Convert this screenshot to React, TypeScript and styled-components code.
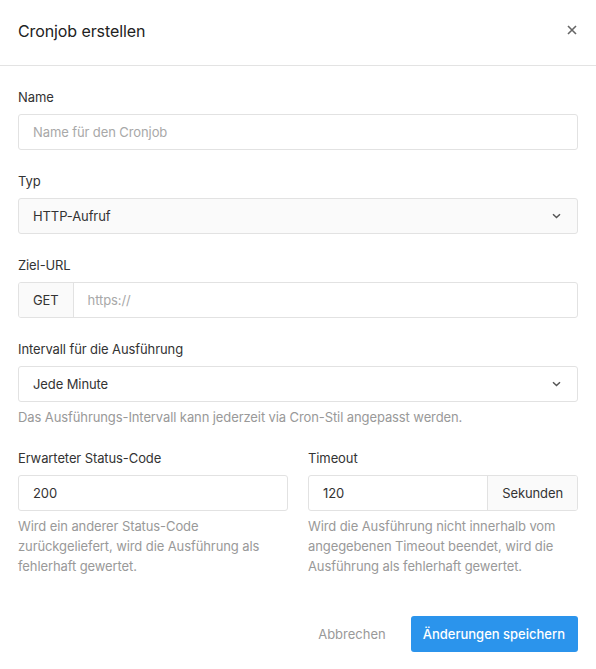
import React from "react";
import styled, { createGlobalStyle } from "styled-components";

const Global = createGlobalStyle`
  html, body { margin: 0; padding: 0; background: #fff; }
  body { font-family: Inter, "Noto Sans", "Liberation Sans", sans-serif; color: #333; letter-spacing: -0.1px; -webkit-font-smoothing: antialiased; }
  * { box-sizing: border-box; }
`;

const Modal = styled.div`
  width: 596px;
  min-height: 669px;
  background: #fff;
  display: flex;
  flex-direction: column;
`;

const Header = styled.div`
  height: 66px;
  display: flex;
  align-items: center;
  justify-content: space-between;
  padding: 0 18px;
  border-bottom: 1px solid #e3e3e3;
`;

const Title = styled.h2`
  margin: 0 0 4px;
  font-size: 16px;
  font-weight: 400;
  color: #222;
  letter-spacing: -0.1px;
`;

const Close = styled.button`
  border: 0;
  background: none;
  padding: 0;
  width: 14px;
  height: 14px;
  display: flex;
  align-items: center;
  justify-content: center;
  cursor: pointer;
  margin-right: -1px;
  margin-top: -6px;
`;

const Body = styled.div`
  padding: 23px 18px 0;
  display: flex;
  flex-direction: column;
  gap: 23px;
`;

const Field = styled.div`
  display: flex;
  flex-direction: column;
  min-width: 0;
`;

const Label = styled.label`
  font-size: 13px;
  line-height: 17px;
  color: #333;
  margin-bottom: 8px;
`;

const Control = styled.div<{ $muted?: boolean }>`
  height: 36px;
  border: 1px solid #e2e2e2;
  border-radius: 3px;
  background: ${(p) => (p.$muted ? "#fafafa" : "#fff")};
  display: flex;
  align-items: stretch;
  overflow: hidden;
`;

const Input = styled.input`
  flex: 1;
  min-width: 0;
  border: 0;
  outline: none;
  background: transparent;
  padding: 0 14px;
  font: inherit;
  font-size: 13px;
  letter-spacing: -0.1px;
  color: #333;
  &::placeholder { color: #a8a8a8; }
`;

const Addon = styled.div<{ $side: "left" | "right" }>`
  display: flex;
  align-items: center;
  padding: 0 14px;
  font-size: 13px;
  color: #333;
  background: #fafafa;
  ${(p) => (p.$side === "left" ? "border-right: 1px solid #e2e2e2;" : "border-left: 1px solid #e2e2e2;")}
`;

const SelectBox = styled.div`
  flex: 1;
  display: flex;
  align-items: center;
  justify-content: space-between;
  padding: 0 16px 0 14px;
  font-size: 13px;
  color: #333;
`;

const Help = styled.p`
  margin: 5px 0 0;
  font-size: 13px;
  line-height: 20px;
  color: #999;
`;

const Row = styled.div`
  display: grid;
  grid-template-columns: 1fr 1fr;
  column-gap: 20px;
`;

const Footer = styled.div`
  display: flex;
  justify-content: flex-end;
  align-items: center;
  gap: 25px;
  padding: 40px 18px 0;
`;

const TextButton = styled.button`
  border: 0;
  background: none;
  font: inherit;
  font-size: 13px;
  color: #999;
  cursor: pointer;
  padding: 0;
`;

const Primary = styled.button`
  border: 0;
  background: #2b94ec;
  color: #fff;
  font: inherit;
  font-size: 13px;
  font-weight: 500;
  height: 36px;
  padding: 0 13px 0 12px;
  border-radius: 3px;
  cursor: pointer;
`;

const Chevron = () => (
  <svg width="9" height="6" viewBox="0 0 9 6">
    <path d="M1 1.2 L4.5 4.5 L8 1.2" fill="none" stroke="#555" strokeWidth="1.5" />
  </svg>
);

export default function App() {
  return (
    <>
      <Global />
      <Modal>
        <Header>
          <Title>Cronjob erstellen</Title>
          <Close aria-label="Schließen">
            <svg width="10" height="10" viewBox="0 0 10 10">
              <path d="M1 1 L9 9 M9 1 L1 9" stroke="#666" strokeWidth="1.6" />
            </svg>
          </Close>
        </Header>
        <Body>
          <Field>
            <Label>Name</Label>
            <Control>
              <Input placeholder="Name für den Cronjob" />
            </Control>
          </Field>
          <Field>
            <Label>Typ</Label>
            <Control $muted>
              <SelectBox>
                HTTP-Aufruf
                <Chevron />
              </SelectBox>
            </Control>
          </Field>
          <Field>
            <Label>Ziel-URL</Label>
            <Control>
              <Addon $side="left">GET</Addon>
              <Input placeholder="https://" />
            </Control>
          </Field>
          <Field>
            <Label>Intervall für die Ausführung</Label>
            <Control>
              <SelectBox>
                Jede Minute
                <Chevron />
              </SelectBox>
            </Control>
            <Help>Das Ausführungs-Intervall kann jederzeit via Cron-Stil angepasst werden.</Help>
          </Field>
          <Row>
            <Field>
              <Label>Erwarteter Status-Code</Label>
              <Control>
                <Input defaultValue="200" />
              </Control>
              <Help>Wird ein anderer Status-Code zurückgeliefert, wird die Ausführung als fehlerhaft gewertet.</Help>
            </Field>
            <Field>
              <Label>Timeout</Label>
              <Control>
                <Input defaultValue="120" />
                <Addon $side="right">Sekunden</Addon>
              </Control>
              <Help>Wird die Ausführung nicht innerhalb vom angegebenen Timeout beendet, wird die Ausführung als fehlerhaft gewertet.</Help>
            </Field>
          </Row>
        </Body>
        <Footer>
          <TextButton>Abbrechen</TextButton>
          <Primary>Änderungen speichern</Primary>
        </Footer>
      </Modal>
    </>
  );
}
